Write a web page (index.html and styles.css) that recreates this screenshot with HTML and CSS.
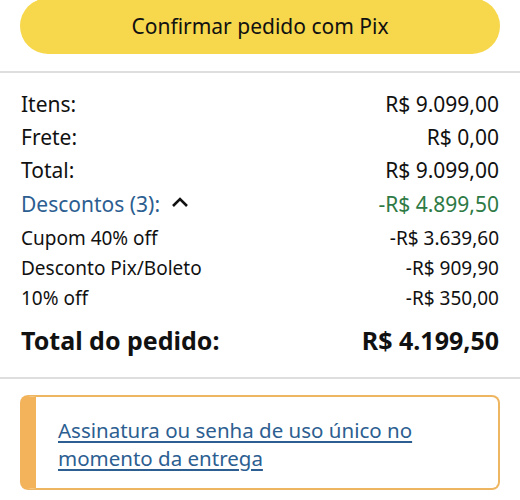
FILE: index.html
```html
<!DOCTYPE html>
<html lang="pt-BR">
<head>
<meta charset="utf-8">
<link rel="stylesheet" href="styles.css">
</head>
<body>
<div class="top">
  <button class="pix-btn">Confirmar pedido com Pix</button>
</div>
<div class="summary">
  <div class="row"><span>Itens:</span><span>R$ 9.099,00</span></div>
  <div class="row"><span>Frete:</span><span>R$ 0,00</span></div>
  <div class="row"><span>Total:</span><span>R$ 9.099,00</span></div>
  <div class="row disc"><span class="disc-label">Descontos (3):
    <svg class="caret" width="18" height="12" viewBox="0 0 18 12"><path d="M2 10 L9 3 L16 10" fill="none" stroke="#111" stroke-width="2.6"/></svg></span><span class="green">-R$ 4.899,50</span></div>
  <div class="sub">
    <div class="row small"><span>Cupom 40% off</span><span>-R$ 3.639,60</span></div>
    <div class="row small"><span>Desconto Pix/Boleto</span><span>-R$ 909,90</span></div>
    <div class="row small"><span>10% off</span><span>-R$ 350,00</span></div>
  </div>
  <div class="row total"><span>Total do pedido:</span><span>R$ 4.199,50</span></div>
</div>
<div class="alert-wrap">
  <div class="alert">
    <a href="#">Assinatura ou senha de uso único no momento da entrega</a>
  </div>
</div>
</body>
</html>
```
FILE: styles.css
```css
html, body {
  margin: 0;
  padding: 0;
  background: #fff;
  font-family: "Noto Sans", "Open Sans", sans-serif;
  color: #111;
}
.top {
  padding: 0 20px 17px;
  border-bottom: 2px solid #dedede;
}
.pix-btn {
  display: block;
  width: 100%;
  height: 56px;
  margin-top: -2px;
  border: none;
  border-radius: 28px;
  background: #f7d74b;
  font-family: inherit;
  font-size: 21px;
  color: #111;
}
.summary {
  padding: 15px 21px 22px 21px;
  border-bottom: 2px solid #dedede;
}
.row {
  display: flex;
  justify-content: space-between;
  align-items: center;
  font-size: 21px;
  line-height: 33px;
}
.row.disc { margin-top: 1px; }
.disc-label {
  color: #2c5e91;
  display: flex;
  align-items: center;
  gap: 11px;
}
.caret { display: block; margin-top: -6px; }
.green { color: #2e7a45; }
.sub { padding-top: 2px; }
.row.small {
  font-size: 19px;
  line-height: 30px;
}
.row.total {
  font-size: 25px;
  font-weight: 700;
  line-height: 30px;
  margin-top: 12px;
}
.alert-wrap {
  padding: 16px 20px 10px;
}
.alert {
  border: 2px solid #efb661;
  border-left: 16px solid #f2b35b;
  border-radius: 8px;
  padding: 19px 20px 16px 22px;
}
.alert a {
  color: #2c5e91;
  font-size: 20.5px;
  line-height: 28px;
  text-decoration: underline;
  text-underline-offset: 3px;
}
```
